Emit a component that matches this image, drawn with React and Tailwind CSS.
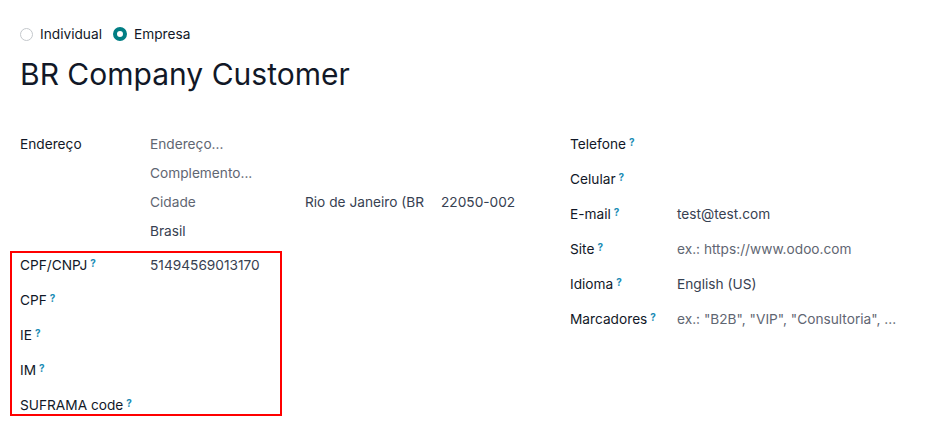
import React from "react";

const Help = () => (
  <sup className="ml-[3px] text-[10px] font-bold text-[#1a8cb5] relative -top-[3px]">?</sup>
);

const Label = ({ children, help = true }) => (
  <span className="font-normal text-[#111827]">
    {children}
    {help && <Help />}
  </span>
);

const LeftRow = ({ label, children, last }) => (
  <div className={`flex items-start pt-[2px] ${last ? "h-[21px]" : "h-[35px]"}`}>
    <div className="w-[120px] leading-[20px]">
      <Label>{label}</Label>
    </div>
    <div className="leading-[20px] text-[#374151]">{children}</div>
  </div>
);

const RightRow = ({ label, children }) => (
  <div className="flex items-center h-[35px]">
    <div className="w-[107px]">
      <Label>{label}</Label>
    </div>
    <div className="text-[#374151]">{children}</div>
  </div>
);

export default function App() {
  return (
    <div
      className="w-[933px] h-[436px] bg-white pl-[20px] pt-[24px] text-[13.7px] overflow-hidden"
      style={{ fontFamily: "Inter, 'Noto Sans', sans-serif" }}
    >
      <div className="flex items-center h-[20px] text-[#111827]">
        <span className="w-[13px] h-[13px] rounded-full border border-[#c4c8cc] bg-white" />
        <span className="ml-[7px]">Individual</span>
        <span className="ml-[11px] w-[14px] h-[14px] rounded-full border-[4px] border-[#017e84] bg-white" />
        <span className="ml-[7px]">Empresa</span>
      </div>

      <h1 className="mt-[12px] text-[30px] leading-[36px] text-[#111827]">BR Company Customer</h1>

      <div className="flex mt-[35px]">
        <div className="w-[550px] pt-[3px]">
          <div className="flex">
            <div className="w-[130px] h-[29px] flex items-center">
              <Label help={false}>Endereço</Label>
            </div>
            <div className="flex flex-col">
              <div className="h-[29px] flex items-center text-[#5f6672]">Endereço...</div>
              <div className="h-[29px] flex items-center text-[#5f6672]">Complemento...</div>
              <div className="h-[29px] flex items-center">
                <span className="w-[155px] text-[#5f6672]">Cidade</span>
                <span className="w-[136px] whitespace-nowrap text-[#374151]">Rio de Janeiro (BR</span>
                <span className="text-[#374151]">22050-002</span>
              </div>
              <div className="h-[29px] flex items-center text-[#374151]">Brasil</div>
            </div>
          </div>

          <div className="mt-[5px] -ml-[10px] w-[272px] border-2 border-[#ff0000] pl-[8px]">
            <div className="flex items-start pt-[2px] h-[35px]">
              <div className="w-[130px] leading-[20px]">
                <Label>CPF/CNPJ</Label>
              </div>
              <div className="leading-[20px] text-[#374151]">51494569013170</div>
            </div>
            <LeftRow label="CPF" />
            <LeftRow label="IE" />
            <LeftRow label="IM" />
            <LeftRow label="SUFRAMA code" last />
          </div>
        </div>

        <div className="flex-1">
          <RightRow label="Telefone" />
          <RightRow label="Celular" />
          <RightRow label="E-mail">test@test.com</RightRow>
          <RightRow label="Site">
            <span className="text-[#5f6672]">ex.: https://www.odoo.com</span>
          </RightRow>
          <RightRow label="Idioma">English (US)</RightRow>
          <RightRow label="Marcadores">
            <span className="text-[#5f6672]">ex.: "B2B", "VIP", "Consultoria", ...</span>
          </RightRow>
        </div>
      </div>
    </div>
  );
}
